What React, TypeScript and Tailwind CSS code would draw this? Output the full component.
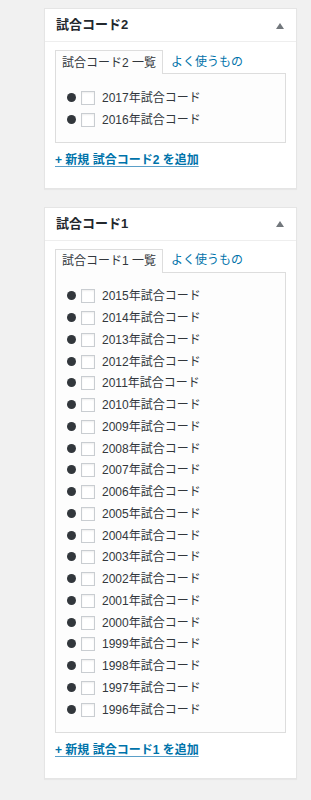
import React from 'react';

interface PanelProps {
  title: string;
  tabLabel: string;
  addLabel: string;
  items: string[];
  className?: string;
}

const Panel: React.FC<PanelProps> = ({ title, tabLabel, addLabel, items, className }) => {
  return (
    <div className={`w-[253px] border border-[#e5e5e5] bg-white shadow-[0_1px_1px_rgba(0,0,0,0.04)] ${className ?? ''}`}>
      {/* ヘッダー */}
      <div className="flex h-[33px] items-center justify-between border-b border-[#eeeeee] pl-[11px] pr-[12px]">
        <h2 className="text-[13px] font-bold text-[#23282d]">{title}</h2>
        <svg width="8" height="6" viewBox="0 0 8 6" className="mt-[1px]">
          <polygon points="4,0 8,6 0,6" fill="#72777c" />
        </svg>
      </div>
      {/* 本体 */}
      <div className="px-[10px] pt-[8px] pb-[20px]">
        <div className="flex items-end text-[12px]">
          <div className="relative z-10 -mb-px flex h-[24px] items-center border border-b-0 border-[#dddddd] bg-[#fdfdfd] px-[6px] text-[#32373c]">
            {tabLabel}
          </div>
          <span className="ml-[8px] flex h-[23px] items-center text-[#0073aa]">よく使うもの</span>
        </div>
        <div className="border border-[#dddddd] bg-[#fdfdfd] pt-[13px] pb-[11px] pl-[11px]">
          <ul>
            {items.map((item) => (
              <li key={item} className="flex h-[21.75px] items-center text-[12px] text-[#32373c]">
                <span className="mb-[1px] h-[9px] w-[9px] rounded-full bg-[#32373c]" />
                <span className="ml-[5px] h-[14px] w-[14px] border border-[#c9cdd1] bg-white shadow-[inset_0_1px_2px_rgba(0,0,0,0.07)]" />
                <span className="ml-[7px]">{item}</span>
              </li>
            ))}
          </ul>
        </div>
        <a
          href="#"
          className="mt-[9px] block text-[12px] leading-[16px] font-bold text-[#0073aa] underline decoration-[#5a9fc8] underline-offset-[2px]"
        >
          {addLabel}
        </a>
      </div>
    </div>
  );
};

const years2 = ['2017', '2016'];
const years1 = Array.from({ length: 20 }, (_, i) => String(2015 - i));

export default function App() {
  return (
    <div className="min-h-[800px] w-[311px] bg-[#f1f1f1] pt-[8px] pl-[44px] font-['Liberation_Sans','Noto_Sans_CJK_JP',sans-serif]">
      <Panel
        title="試合コード2"
        tabLabel="試合コード2 一覧"
        addLabel="+ 新規 試合コード2 を追加"
        items={years2.map((y) => `${y}年試合コード`)}
      />
      <Panel
        className="mt-[18px]"
        title="試合コード1"
        tabLabel="試合コード1 一覧"
        addLabel="+ 新規 試合コード1 を追加"
        items={years1.map((y) => `${y}年試合コード`)}
      />
    </div>
  );
}
